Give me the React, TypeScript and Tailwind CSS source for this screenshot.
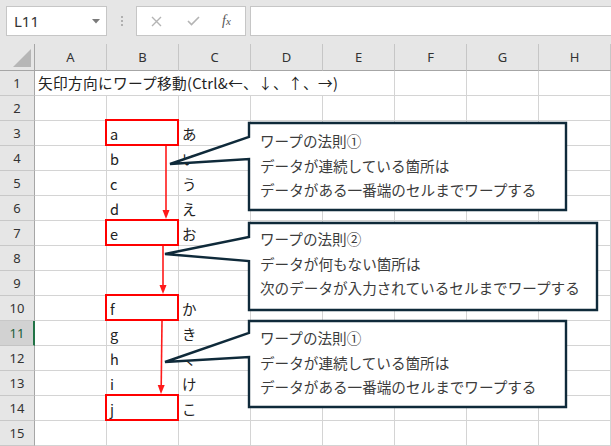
import React from 'react';

const COLS = ['A', 'B', 'C', 'D', 'E', 'F', 'G', 'H'];

const colB: Record<number, string> = {
  3: 'a', 4: 'b', 5: 'c', 6: 'd', 7: 'e',
  10: 'f', 11: 'g', 12: 'h', 13: 'i', 14: 'j',
};
const colC: Record<number, string> = {
  3: 'あ', 4: 'い', 5: 'う', 6: 'え', 7: 'お',
  10: 'か', 11: 'き', 12: 'く', 13: 'け', 14: 'こ',
};

const callouts = [
  {
    top: 129,
    d: 'M249,123 H566 V210 H249 V159 L170,164 L249,137 Z',
    lines: ['ワープの法則①', 'データが連続している箇所は', 'データがある一番端のセルまでワープする'],
  },
  {
    top: 227,
    d: 'M249,223 H597 V310 H249 V261 L165,254 L249,237 Z',
    lines: ['ワープの法則②', 'データが何もない箇所は', '次のデータが入力されているセルまでワープする'],
  },
  {
    top: 326,
    d: 'M249,321 H566 V407 H249 V357 L165,362 L249,333 Z',
    lines: ['ワープの法則①', 'データが連続している箇所は', 'データがある一番端のセルまでワープする'],
  },
];

function Toolbar() {
  return (
    <div className="flex h-[44px] items-start bg-[#e6e6e6] pt-[6px]">
      <div className="ml-[6px] flex h-[30px] w-[101px] items-center justify-between border border-[#c6c6c6] bg-white pl-[7px] pr-[6px]">
        <span className="text-[15px] text-[#333]">L11</span>
        <svg width="8" height="5" viewBox="0 0 8 5">
          <path d="M0 0 H8 L4 4.5 Z" fill="#7a7a7a" />
        </svg>
      </div>
      <div className="ml-[14px] mr-[13px] flex h-[30px] flex-col items-center justify-center gap-[2px]">
        <span className="h-[2px] w-[2px] bg-[#b0b0b0]" />
        <span className="h-[2px] w-[2px] bg-[#b0b0b0]" />
        <span className="h-[2px] w-[2px] bg-[#b0b0b0]" />
      </div>
      <div className="flex h-[30px] w-[110px] items-center border border-[#c6c6c6] bg-white">
        <svg className="ml-[14px]" width="11" height="11" viewBox="0 0 11 11">
          <path d="M1 1 L10 10 M10 1 L1 10" stroke="#b4b4b4" strokeWidth="1.4" />
        </svg>
        <svg className="ml-[25px]" width="13" height="10" viewBox="0 0 13 10">
          <path d="M1 5 L4.5 8.5 L12 1" fill="none" stroke="#b4b4b4" strokeWidth="1.6" />
        </svg>
        <span className="ml-[22px] font-['Liberation_Serif'] text-[14px] italic leading-none text-[#555]">
          f<span className="text-[11px]">x</span>
        </span>
      </div>
      <div className="ml-[4px] h-[30px] flex-1 border-y border-l border-[#c6c6c6] bg-white" />
    </div>
  );
}

function Sheet() {
  const rows = Array.from({ length: 15 }, (_, i) => i + 1);
  return (
    <div className="grid grid-cols-[35px_repeat(8,72px)] font-['Noto_Sans_CJK_JP',sans-serif]">
      <div className="relative h-[27px] border-b border-r border-[#a6a6a6] bg-[#e6e6e6]">
        <svg className="absolute bottom-[3px] right-[3px]" width="18" height="18" viewBox="0 0 18 18">
          <path d="M18 0 V18 H0 Z" fill="#b6b6b6" />
        </svg>
      </div>
      {COLS.map((c) => (
        <div
          key={c}
          className="flex h-[27px] items-center justify-center border-b border-r border-b-[#a6a6a6] border-r-[#c6c6c6] bg-[#e6e6e6] pt-[2px] font-['Noto_Sans',sans-serif] text-[13px] text-[#333]"
        >
          {c}
        </div>
      ))}
      {rows.map((r) => (
        <React.Fragment key={r}>
          <div
            className={
              r === 11
                ? "flex h-[25px] items-center justify-center border-b border-r-2 border-b-[#c4c4c4] border-r-[#217346] bg-[#d2d2d2] pl-[1px] pt-[1px] font-['Noto_Sans',sans-serif] text-[13px] text-[#1b5e38]"
                : "flex h-[25px] items-center justify-center border-b border-r border-b-[#c8c8c8] border-r-[#a6a6a6] bg-[#e6e6e6] pt-[1px] font-['Noto_Sans',sans-serif] text-[13px] text-[#333]"
            }
          >
            {r}
          </div>
          {r === 1 ? (
            <>
              <div className="col-span-5 flex h-[25px] items-center whitespace-nowrap border-b border-r border-[#d4d4d4] bg-white pl-[3px] pt-[1px] text-[14.7px] tracking-[0.3px] text-[#222]">
                矢印方向にワープ移動(Ctrl&amp;←、↓、↑、→)
              </div>
              {COLS.slice(5).map((c) => (
                <div key={c} className="h-[25px] border-b border-r border-[#d4d4d4] bg-white" />
              ))}
            </>
          ) : (
            COLS.map((c) => (
              <div
                key={c}
                className="flex h-[25px] items-center border-b border-r border-[#d4d4d4] bg-white pl-[3px] pt-[2px] text-[14.5px] text-[#222]"
              >
                {c === 'B' ? colB[r] : c === 'C' ? colC[r] : null}
              </div>
            ))
          )}
        </React.Fragment>
      ))}
    </div>
  );
}

function Overlay() {
  const boxes = [119, 219, 294, 394];
  return (
    <>
      <svg className="pointer-events-none absolute left-0 top-0" width="611" height="446" viewBox="0 0 611 446">
        {boxes.map((y) => (
          <rect key={y} x="106" y={y + 1} width="72" height="25" fill="none" stroke="#ff0000" strokeWidth="2" />
        ))}
        <g stroke="#ff1a1a" strokeWidth="1.6" fill="#ff1a1a">
          <line x1="166" y1="146" x2="166" y2="212" />
          <path d="M162.5 210 H169.5 L166 219 Z" stroke="none" />
          <line x1="163" y1="246" x2="163" y2="287" />
          <path d="M159.5 285 H166.5 L163 294 Z" stroke="none" />
          <line x1="162" y1="321" x2="161.2" y2="387" />
          <path d="M157.7 385 H164.7 L161 394 Z" stroke="none" />
        </g>
        {callouts.map((c, i) => (
          <path key={i} d={c.d} fill="#ffffff" stroke="#0f2a3a" strokeWidth="2.4" strokeLinejoin="miter" />
        ))}
      </svg>
      {callouts.map((c, i) => (
        <div
          key={i}
          className="absolute left-[260px] flex flex-col whitespace-nowrap font-['Noto_Sans_CJK_JP',sans-serif] text-[14.6px] leading-[24.5px] text-[#3c3c3c]"
          style={{ top: c.top }}
        >
          {c.lines.map((l, j) => (
            <span key={j}>{l}</span>
          ))}
        </div>
      ))}
    </>
  );
}

export default function App() {
  return (
    <div className="relative h-[446px] w-[611px] overflow-hidden bg-white">
      <Toolbar />
      <Sheet />
      <Overlay />
    </div>
  );
}
